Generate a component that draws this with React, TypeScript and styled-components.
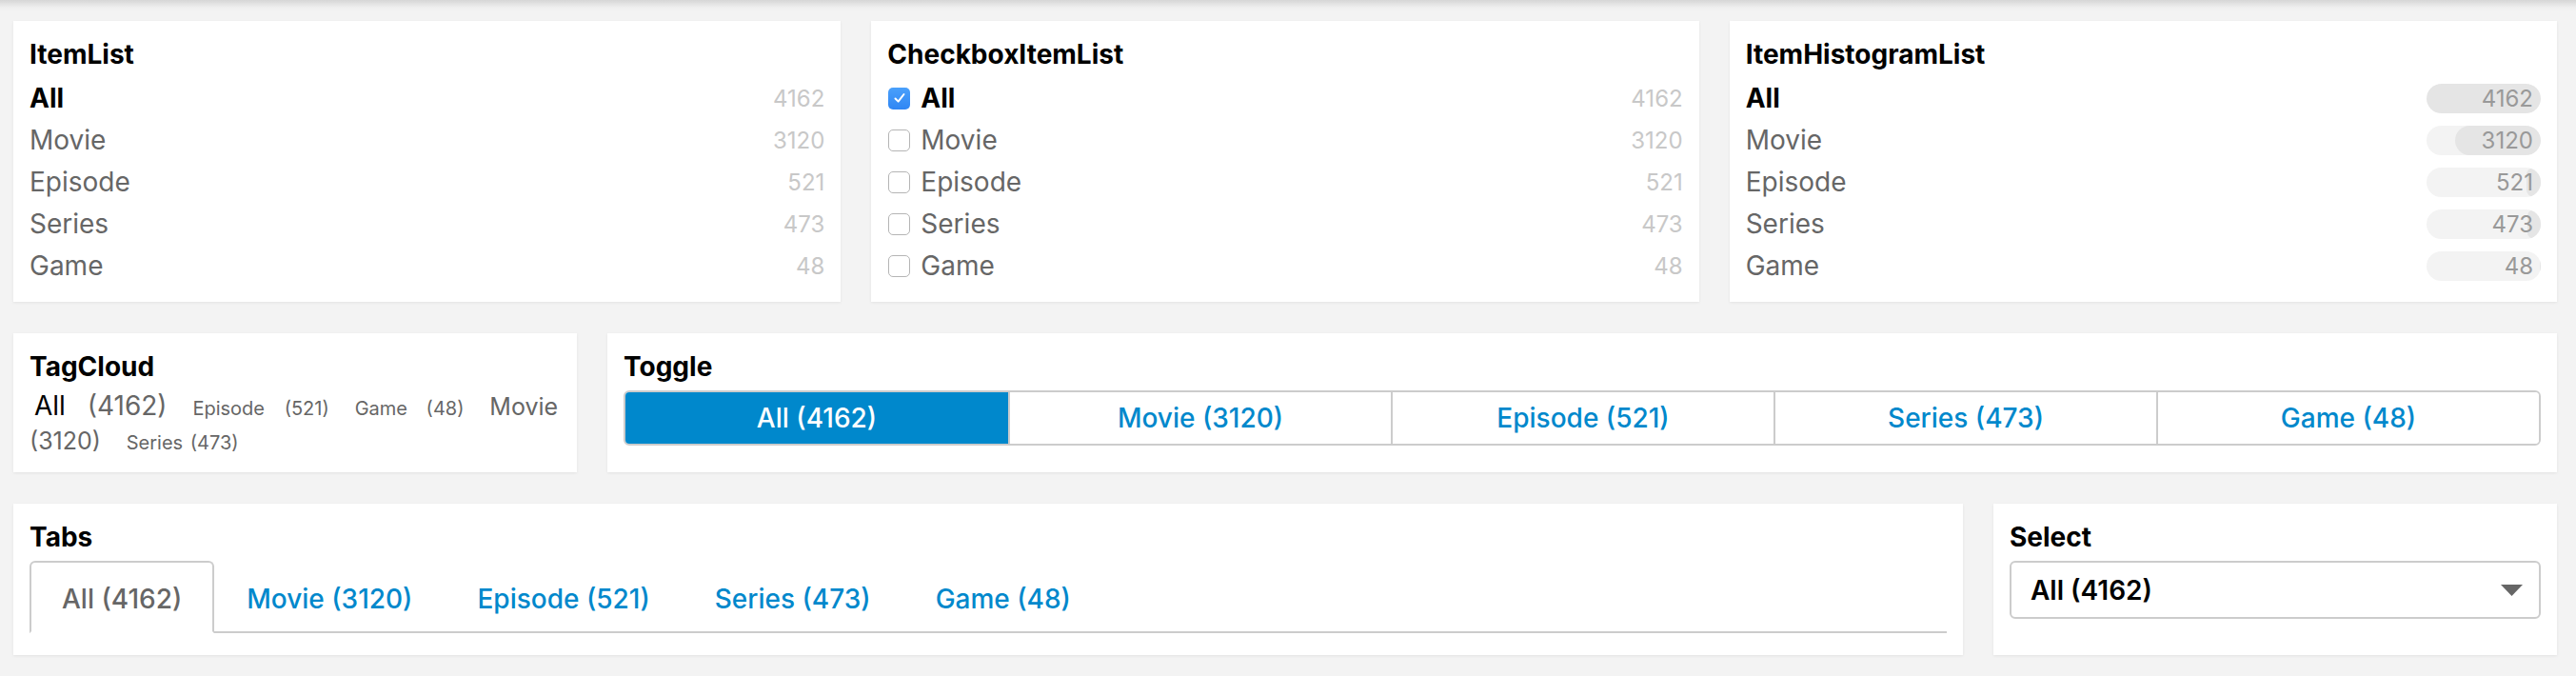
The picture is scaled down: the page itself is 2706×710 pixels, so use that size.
import { Fragment } from "react";
import styled, { createGlobalStyle, css } from "styled-components";

interface Item {
  label: string;
  count: number;
}

const items: Item[] = [
  { label: "All", count: 4162 },
  { label: "Movie", count: 3120 },
  { label: "Episode", count: 521 },
  { label: "Series", count: 473 },
  { label: "Game", count: 48 },
];

// tag cloud is alphabetical, font size follows the count
const cloud = [
  { label: "All", count: 4162, size: 28, gap: 15 },
  { label: "Episode", count: 521, size: 20, gap: 15 },
  { label: "Game", count: 48, size: 20, gap: 14 },
  { label: "Movie", count: 3120, size: 25, gap: 0 },
  { label: "Series", count: 473, size: 20, gap: 2 },
];

const total = items[0].count;

const GlobalStyle = createGlobalStyle`
  html, body {
    margin: 0;
    padding: 0;
    background: #f3f3f3;
  }
  body {
    font-family: Inter, "Noto Sans", "Liberation Sans", sans-serif;
  }
`;

const Page = styled.div`
  min-height: 710px;
  box-sizing: border-box;
  padding: 22px 20px 0 14px;
  background: linear-gradient(to bottom, #d6d6d6 0, #efefef 8px, #f3f3f3 12px);
  display: flex;
  flex-direction: column;
  gap: 33px;
`;

const Row = styled.div<{ $cols: string }>`
  display: grid;
  grid-template-columns: ${({ $cols }) => $cols};
  column-gap: 32px;
  align-items: stretch;
`;

const Card = styled.section<{ $bottom?: number }>`
  background: #fff;
  box-shadow: 0 1px 3px rgba(0, 0, 0, 0.07);
  padding: 18px 17px ${({ $bottom }) => $bottom ?? 16}px;
  box-sizing: border-box;
  min-width: 0;
`;

const Title = styled.h2`
  margin: 0;
  font-size: 28px;
  line-height: 34px;
  font-weight: 700;
  color: #000;
`;

const List = styled.ul`
  list-style: none;
  margin: 7px 0 0;
  padding: 0;
`;

const Row44 = styled.li`
  display: flex;
  align-items: center;
  height: 44px;
`;

const Label = styled.span<{ $active?: boolean }>`
  flex: 1;
  font-size: 28px;
  line-height: 34px;
  color: ${({ $active }) => ($active ? "#000" : "#666")};
  font-weight: ${({ $active }) => ($active ? 700 : 400)};
`;

const Count = styled.span`
  font-size: 24px;
  color: #c8c8c8;
`;

const Box = styled.span<{ $checked?: boolean }>`
  width: 23px;
  height: 23px;
  box-sizing: border-box;
  border-radius: 5px;
  margin: 0 11px 0 1px;
  display: inline-flex;
  align-items: center;
  justify-content: center;
  ${({ $checked }) =>
    $checked
      ? css`
          background: linear-gradient(#4aa0fb, #2f86f4);
        `
      : css`
          background: #fff;
          border: 1.5px solid #b5b5b5;
        `}
`;

const Pill = styled.span`
  position: relative;
  width: 120px;
  height: 31px;
  border-radius: 16px;
  background: #f3f3f3;
  overflow: hidden;
  display: flex;
  align-items: center;
  justify-content: flex-end;
`;

const PillFill = styled.span`
  position: absolute;
  top: 0;
  right: 0;
  bottom: 0;
  border-radius: 16px;
  background: #e5e5e5;
`;

const PillCount = styled.span`
  position: relative;
  font-size: 24px;
  color: #999;
  padding-right: 8px;
`;

const Cloud = styled.div`
  margin-top: 6px;
  font-size: 28px;
  line-height: 36px;
`;

const Tag = styled.span<{ $size: number }>`
  font-size: ${({ $size }) => $size}px;
  line-height: 1;
  margin: 0 14px 0 5px;
`;

const TagLabel = styled.span<{ $active?: boolean; $gap: number }>`
  color: ${({ $active }) => ($active ? "#000" : "#666")};
  margin-right: ${({ $gap }) => $gap}px;
`;

const TagCount = styled.span`
  color: #666;
`;

const ToggleGroup = styled.div`
  display: grid;
  grid-template-columns: repeat(5, 1fr);
  margin: 8px 0 12px;
  border: 2px solid #ccc;
  border-radius: 6px;
  overflow: hidden;
`;

const ToggleButton = styled.button<{ $active?: boolean }>`
  height: 54px;
  border: 0;
  border-left: 2px solid #ccc;
  font-family: inherit;
  font-size: 28px;
  font-weight: 500;
  background: ${({ $active }) => ($active ? "#0088cc" : "#fff")};
  color: ${({ $active }) => ($active ? "#fff" : "#0088cc")};
  &:first-child {
    border-left: 0;
  }
`;

const TabList = styled.div`
  display: flex;
  margin-top: 8px;
  border-bottom: 2px solid #ccc;
`;

const Tab = styled.div<{ $active?: boolean }>`
  padding: 21px 32px 17px;
  font-size: 28px;
  line-height: 34px;
  font-weight: 500;
  margin-bottom: -2px;
  border: 2px solid transparent;
  border-radius: 6px 6px 0 0;
  color: #0088cc;
  ${({ $active }) =>
    $active &&
    css`
      color: #666;
      border-color: #ccc;
      border-bottom-color: #fff;
    `}
`;

const SelectBox = styled.div`
  margin-top: 8px;
  height: 61px;
  box-sizing: border-box;
  border: 2px solid #ccc;
  border-radius: 6px;
  display: flex;
  align-items: center;
  justify-content: space-between;
  padding: 0 17px 0 20px;
  font-size: 28px;
  font-weight: 600;
  color: #000;
`;

const Check = () => (
  <svg width="14" height="14" viewBox="0 0 14 14">
    <path d="M2.5 7.5 L5.6 10.6 L11.5 3" fill="none" stroke="#fff" strokeWidth="2" strokeLinecap="round" strokeLinejoin="round" />
  </svg>
);

const Caret = () => (
  <svg width="23" height="12" viewBox="0 0 23 12">
    <path d="M0 0 H23 L11.5 12 Z" fill="#666" />
  </svg>
);

function App() {
  return (
    <>
      <GlobalStyle />
      <Page>
        <Row $cols="1fr 1fr 1fr">
          <Card>
            <Title>ItemList</Title>
            <List>
              {items.map((it, i) => (
                <Row44 key={it.label}>
                  <Label $active={i === 0}>{it.label}</Label>
                  <Count>{it.count}</Count>
                </Row44>
              ))}
            </List>
          </Card>
          <Card>
            <Title>CheckboxItemList</Title>
            <List>
              {items.map((it, i) => (
                <Row44 key={it.label}>
                  <Box $checked={i === 0}>{i === 0 && <Check />}</Box>
                  <Label $active={i === 0}>{it.label}</Label>
                  <Count>{it.count}</Count>
                </Row44>
              ))}
            </List>
          </Card>
          <Card>
            <Title>ItemHistogramList</Title>
            <List>
              {items.map((it, i) => (
                <Row44 key={it.label}>
                  <Label $active={i === 0}>{it.label}</Label>
                  <Pill>
                    <PillFill style={{ width: `${(it.count / total) * 100}%` }} />
                    <PillCount>{it.count}</PillCount>
                  </Pill>
                </Row44>
              ))}
            </List>
          </Card>
        </Row>

        <Row $cols="592px 1fr">
          <Card>
            <Title>TagCloud</Title>
            <Cloud>
              {cloud.map((t, i) => (
                <Fragment key={t.label}>
                  <Tag $size={t.size}>
                    <TagLabel $active={i === 0} $gap={t.gap}>
                      {t.label}
                    </TagLabel>{" "}
                    <TagCount>({t.count})</TagCount>
                  </Tag>{" "}
                </Fragment>
              ))}
            </Cloud>
          </Card>
          <Card>
            <Title>Toggle</Title>
            <ToggleGroup>
              {items.map((it, i) => (
                <ToggleButton key={it.label} $active={i === 0}>
                  {it.label} ({it.count})
                </ToggleButton>
              ))}
            </ToggleGroup>
          </Card>
        </Row>

        <Row $cols="1fr 592px">
          <Card $bottom={23}>
            <Title>Tabs</Title>
            <TabList>
              {items.map((it, i) => (
                <Tab key={it.label} $active={i === 0}>
                  {it.label} ({it.count})
                </Tab>
              ))}
            </TabList>
          </Card>
          <Card $bottom={23}>
            <Title>Select</Title>
            <SelectBox>
              <span>All (4162)</span>
              <Caret />
            </SelectBox>
          </Card>
        </Row>
      </Page>
    </>
  );
}

export default App;
